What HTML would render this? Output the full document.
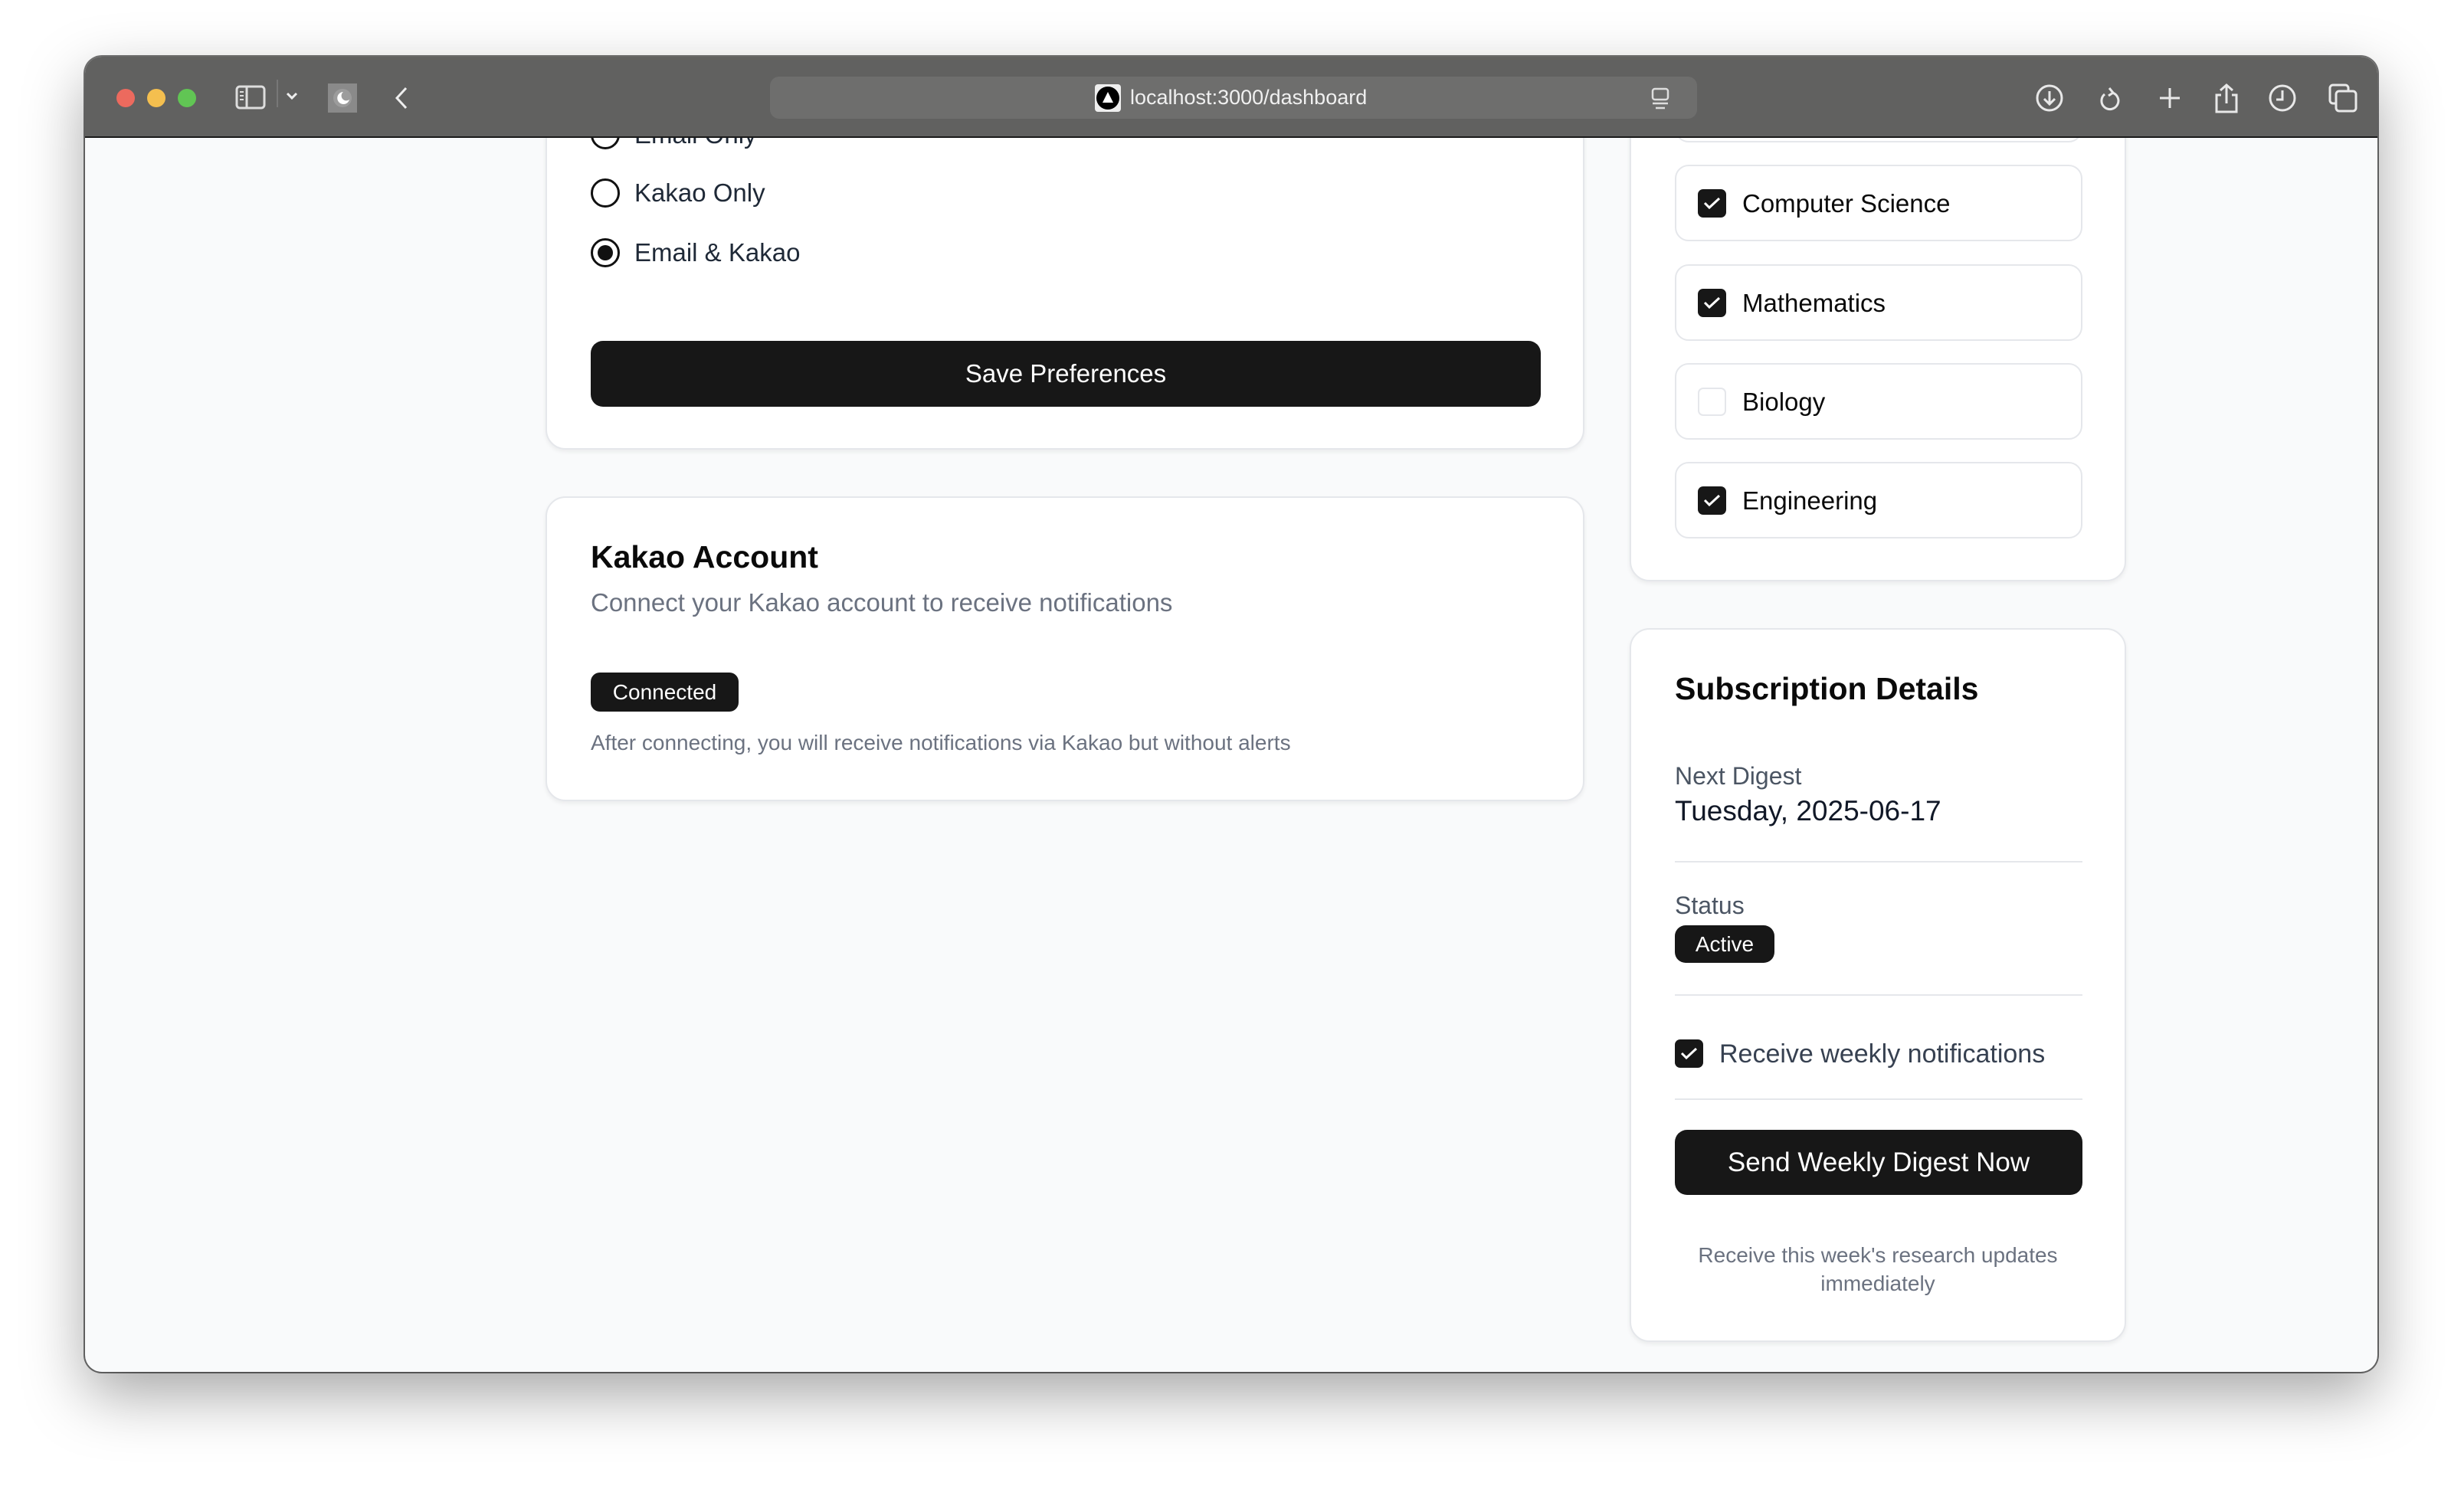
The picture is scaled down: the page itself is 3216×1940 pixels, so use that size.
<!DOCTYPE html>
<html><head><meta charset="utf-8"><style>
*{box-sizing:border-box;margin:0;padding:0}
body{width:3216px;height:1940px;background:#fff;position:relative;overflow:hidden;font-family:"Liberation Sans",sans-serif}
.win{position:absolute;left:111px;top:74px;width:2992px;height:1717px;border-radius:22px;overflow:hidden;background:#f9fafb;box-shadow:0 30px 80px rgba(0,0,0,.35),0 0 0 2px rgba(0,0,0,.55)}
.bar{position:absolute;left:0;top:0;width:100%;height:106px;background:#616160;border-bottom:2px solid #1a1a1a;z-index:2}
.content{position:absolute;left:0;top:106px;width:100%;height:1611px;overflow:hidden}
.dot{position:absolute;top:42px;width:24px;height:24px;border-radius:50%}
.url{position:absolute;left:894px;top:26px;width:1210px;height:55px;border-radius:12px;background:#6e6e6d}
.abs{position:absolute}
.card{position:absolute;background:#fff;border:2px solid #e5e7eb;border-radius:26px;box-shadow:0 3px 6px rgba(0,0,0,.06)}
.t{position:absolute;white-space:nowrap}
.radio{position:absolute;width:38px;height:38px;border:3px solid #111;border-radius:50%}
.btn{position:absolute;background:#171717;color:#fff;border-radius:16px;display:flex;align-items:center;justify-content:center;font-weight:500}
.item{position:absolute;left:57px;width:532px;height:100px;border:2px solid #e5e7eb;border-radius:18px;background:#fff}
.cb{position:absolute;width:37px;height:37px;border-radius:7px;background:#171717}
.cb svg{position:absolute;left:6px;top:7px}
.hr{position:absolute;left:57px;width:532px;height:2px;background:#e5e7eb}
</style></head><body>
<div class="win">
 <div class="bar">
  <div class="dot" style="left:41px;background:#ec6a5e"></div>
  <div class="dot" style="left:81px;background:#f4bf4f"></div>
  <div class="dot" style="left:121px;background:#61c554"></div>
  <svg class="abs" style="left:196px;top:37px" width="40" height="32" viewBox="0 0 40 32"><rect x="2" y="2" width="36" height="28" rx="4" fill="none" stroke="#ddd" stroke-width="3"/><line x1="15" y1="2" x2="15" y2="30" stroke="#ddd" stroke-width="3"/><path d="M6 9h5M6 14h5M6 19h5" stroke="#ddd" stroke-width="2"/></svg>
  <div class="abs" style="left:250px;top:30px;width:2px;height:36px;background:#777"></div>
  <svg class="abs" style="left:262px;top:45px" width="16" height="12" viewBox="0 0 16 12"><path d="M2 3l6 6 6-6" fill="none" stroke="#eee" stroke-width="3"/></svg>
  <div class="abs" style="left:317px;top:35px;width:38px;height:38px;background:#8a8a8a"></div>
  <svg class="abs" style="left:323px;top:41px" width="26" height="26" viewBox="0 0 26 26"><circle cx="13" cy="13" r="12" fill="#9c9c9c"/><path d="M14 5a8 8 0 1 0 8 10a6 6 0 0 1-8-10z" fill="#fff"/></svg>
  <svg class="abs" style="left:403px;top:38px" width="20" height="32" viewBox="0 0 20 32"><path d="M16 3L4 16l12 13" fill="none" stroke="#eee" stroke-width="3"/></svg>
  <div class="url">
   <div class="abs" style="left:424px;top:10px;width:34px;height:36px;background:#eee;border-radius:4px"><div style="position:absolute;left:2px;top:3px;width:30px;height:30px;border-radius:50%;background:#000"></div><div style="position:absolute;left:10px;top:10px;border-left:7px solid transparent;border-right:7px solid transparent;border-bottom:14px solid #fff"></div></div>
   <div class="t" style="left:470px;top:12px;font-size:27px;color:#f0f0f0">localhost:3000/dashboard</div>
   <svg class="abs" style="left:1150px;top:14px" width="24" height="30" viewBox="0 0 24 30"><rect x="2" y="2" width="20" height="14" rx="3" fill="none" stroke="#ddd" stroke-width="2.5"/><path d="M2 21h20M6 27h12" stroke="#ddd" stroke-width="2.5"/></svg>
  </div>
  <svg class="abs" style="left:2546px;top:33px" width="440" height="42" viewBox="0 0 440 42" fill="none" stroke="#e8e8e8" stroke-width="3">
   <circle cx="18" cy="21" r="16"/><path d="M18 12v17M11 22l7 7 7-7"/>
   <path d="M100 14a11 11 0 1 1-10 2M96 8l5 6-6 4"/>
   <path d="M162 21h26M175 8v26"/>
   <path d="M242 17h-6v22h26V17h-6M249 28V4M241 11l8-7 8 7"/>
   <circle cx="322" cy="21" r="16"/><path d="M322 11v12h-8"/>
   <rect x="384" y="4" width="24" height="24" rx="4"/><rect x="392" y="12" width="26" height="26" rx="4" fill="#616160"/>
  </svg>
 </div>
 <div class="content">
 <div class="card" style="left:601px;top:-200px;width:1356px;height:607px">
  <div class="radio" style="left:57px;top:175px"></div>
  <div class="t" style="left:114px;top:175px;font-size:33px;color:#1f2937">Email Only</div>
  <div class="radio" style="left:57px;top:251px"></div>
  <div class="t" style="left:114px;top:251px;font-size:33px;color:#1f2937">Kakao Only</div>
  <div class="radio" style="left:57px;top:329px"><div style="position:absolute;left:6px;top:6px;width:20px;height:20px;border-radius:50%;background:#111"></div></div>
  <div class="t" style="left:114px;top:329px;font-size:33px;color:#1f2937">Email &amp; Kakao</div>
  <div class="btn" style="left:57px;top:463px;width:1240px;height:86px;font-size:33px">Save Preferences</div>
 </div>
 <div class="card" style="left:601px;top:468px;width:1356px;height:398px">
  <div class="t" style="left:57px;top:54px;font-size:41px;font-weight:700;color:#0a0a0a">Kakao Account</div>
  <div class="t" style="left:57px;top:118px;font-size:33px;color:#6b7280">Connect your Kakao account to receive notifications</div>
  <div class="btn" style="left:57px;top:228px;width:193px;height:51px;border-radius:12px;font-size:28px">Connected</div>
  <div class="t" style="left:57px;top:304px;font-size:28px;color:#6b7280">After connecting, you will receive notifications via Kakao but without alerts</div>
 </div>
 <div class="card" style="left:2016px;top:-200px;width:648px;height:779px">
  <div class="item" style="top:104px"></div>
  <div class="item" style="top:233px"><div class="cb" style="left:28px;top:30px"><svg width="25" height="22" viewBox="0 0 25 22"><path d="M3 11l6 6 13-12" fill="none" stroke="#fff" stroke-width="3"/></svg></div><div class="t" style="left:86px;top:30px;font-size:33px;font-weight:500;color:#0a0a0a">Computer Science</div></div>
  <div class="item" style="top:363px"><div class="cb" style="left:28px;top:30px"><svg width="25" height="22" viewBox="0 0 25 22"><path d="M3 11l6 6 13-12" fill="none" stroke="#fff" stroke-width="3"/></svg></div><div class="t" style="left:86px;top:30px;font-size:33px;font-weight:500;color:#0a0a0a">Mathematics</div></div>
  <div class="item" style="top:492px"><div class="cb" style="left:28px;top:30px;background:#fff;border:2px solid #e5e7eb"></div><div class="t" style="left:86px;top:30px;font-size:33px;font-weight:500;color:#0a0a0a">Biology</div></div>
  <div class="item" style="top:621px"><div class="cb" style="left:28px;top:30px"><svg width="25" height="22" viewBox="0 0 25 22"><path d="M3 11l6 6 13-12" fill="none" stroke="#fff" stroke-width="3"/></svg></div><div class="t" style="left:86px;top:30px;font-size:33px;font-weight:500;color:#0a0a0a">Engineering</div></div>
 </div>
 <div class="card" style="left:2016px;top:640px;width:648px;height:932px">
  <div class="t" style="left:57px;top:54px;font-size:41px;font-weight:700;color:#0a0a0a">Subscription Details</div>
  <div class="t" style="left:57px;top:173px;font-size:32px;color:#4b5563">Next Digest</div>
  <div class="t" style="left:57px;top:216px;font-size:37px;font-weight:500;color:#111827">Tuesday, 2025-06-17</div>
  <div class="hr" style="top:302px"></div>
  <div class="t" style="left:57px;top:342px;font-size:32px;color:#4b5563">Status</div>
  <div class="btn" style="left:57px;top:386px;width:130px;height:49px;border-radius:14px;font-size:28px">Active</div>
  <div class="hr" style="top:476px"></div>
  <div class="cb" style="left:57px;top:535px"><svg width="25" height="22" viewBox="0 0 25 22"><path d="M3 11l6 6 13-12" fill="none" stroke="#fff" stroke-width="3"/></svg></div>
  <div class="t" style="left:115px;top:535px;font-size:34px;font-weight:500;color:#374151">Receive weekly notifications</div>
  <div class="hr" style="top:612px"></div>
  <div class="btn" style="left:57px;top:653px;width:532px;height:85px;font-size:35px">Send Weekly Digest Now</div>
  <div class="t" style="left:0;width:644px;top:798px;font-size:28px;color:#6b7280;text-align:center;white-space:normal;line-height:37px;padding:0 60px">Receive this week's research updates immediately</div>
 </div>
 </div>
</div>
</body></html>
